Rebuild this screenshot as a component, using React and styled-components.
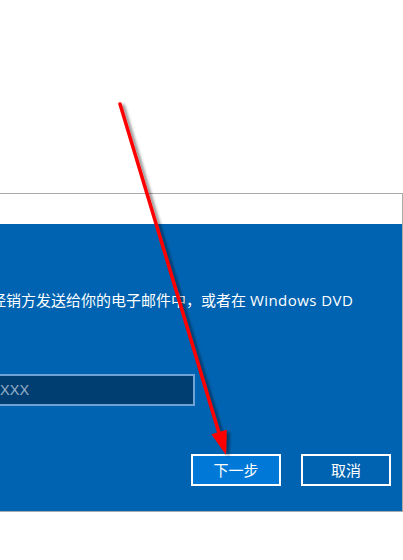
import React from "react";
import styled, { createGlobalStyle } from "styled-components";

const GlobalStyle = createGlobalStyle`
  html, body { margin: 0; padding: 0; background: #ffffff; }
  body { font-family: "Open Sans", "Noto Sans CJK SC", sans-serif; }
  * { box-sizing: border-box; }
`;

const Page = styled.div`
  position: relative;
  width: 403px;
  height: 560px;
  overflow: hidden;
  background: #ffffff;
  padding-top: 193px;
`;

const Window = styled.div`
  margin-left: -266px;
  width: 669px;
  height: 319px;
  border: 1px solid #aaaaaa;
  display: flex;
  flex-direction: column;
  background: #ffffff;
`;

const TitleBar = styled.div`
  height: 30px;
  flex: none;
  background: #ffffff;
`;

const Body = styled.div`
  flex: 1;
  background: #0063b1;
  padding: 66px 11px 25px 16px;
  display: flex;
  flex-direction: column;
`;

const Message = styled.p`
  margin: 0;
  color: #ffffff;
  font-size: 15px;
  line-height: 20px;
  font-family: "Open Sans", "Noto Sans CJK SC", sans-serif;
  white-space: nowrap;
`;

const Line = styled.span`
  display: block;
`;

const Latin = styled.span`
  letter-spacing: 0.45px;
`;

const KeyInput = styled.input`
  margin-top: 44px;
  width: 444px;
  height: 32px;
  border: 2px solid #6fa3d6;
  background: #003e72;
  color: #ffffff;
  padding: 0 0 0 15px;
  font-family: "Liberation Sans", Arial, sans-serif;
  font-size: 14.5px;
  outline: none;
  &::placeholder {
    color: #96aec6;
    opacity: 1;
  }
`;

const ButtonRow = styled.div`
  margin-top: 48px;
  display: flex;
  justify-content: flex-end;
  gap: 20px;
`;

const DialogButton = styled.button`
  width: 90px;
  height: 32px;
  border: 2px solid #ffffff;
  background: ${(p) => (p.$primary ? "#0078d7" : "#0063b1")};
  color: #ffffff;
  font-family: "Noto Sans CJK SC", sans-serif;
  font-size: 15px;
  line-height: 20px;
  padding: 0;
  cursor: pointer;
`;

const Overlay = styled.svg`
  position: absolute;
  left: 0;
  top: 0;
  width: 403px;
  height: 560px;
  pointer-events: none;
`;

export default function App() {
  return (
    <>
      <GlobalStyle />
      <Page>
        <Window>
          <TitleBar />
          <Body>
            <Message>
              <Line>
                你的产品密钥应该位于从微软授权的经销方发送给你的电子邮件中，或者在 <Latin>Windows DVD</Latin>
              </Line>
              <Line>的包装盒上。</Line>
            </Message>
            <KeyInput placeholder="XXXXX-XXXXX-XXXXX-XXXXX-XXXXX" />
            <ButtonRow>
              <DialogButton $primary>下一步</DialogButton>
              <DialogButton>取消</DialogButton>
            </ButtonRow>
          </Body>
        </Window>
        <Overlay viewBox="0 0 403 560">
          <defs>
            <filter id="arrowShadow" x="-50%" y="-10%" width="200%" height="120%">
              <feDropShadow dx="3" dy="2" stdDeviation="1.6" floodColor="#000000" floodOpacity="0.45" />
            </filter>
          </defs>
          <g filter="url(#arrowShadow)">
            <line x1="120" y1="104" x2="219" y2="433" stroke="#ff0000" strokeWidth="3.5" strokeLinecap="round" />
            <polygon points="226,455 211.4,434.3 226.8,429.7" fill="#ff0000" />
          </g>
        </Overlay>
      </Page>
    </>
  );
}
